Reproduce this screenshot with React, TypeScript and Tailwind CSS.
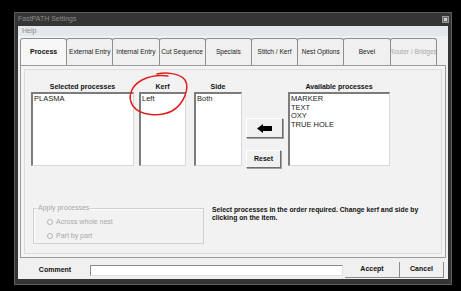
import React from "react";

const font = { fontFamily: '"Liberation Sans", Arial, sans-serif' };

const tabs = [
  "Process",
  "External Entry",
  "Internal Entry",
  "Cut Sequence",
  "Specials",
  "Stitch / Kerf",
  "Nest Options",
  "Bevel",
  "Router / Bridges",
];

function ListBox({ w, items }: { w: string; items: string[] }) {
  return (
    <div
      className={`${w} h-[74px] bg-white border-t-2 border-l-2 border-b border-r border-t-[#7c7c7c] border-l-[#7c7c7c] border-b-[#d8d8d8] border-r-[#d8d8d8] pl-[1px] pt-[1px] text-[7.5px] leading-[8.6px] text-[#1a1a1a]`}
    >
      {items.map((t) => (
        <div key={t}>{t}</div>
      ))}
    </div>
  );
}

function Radio({ label }: { label: string }) {
  return (
    <div className="flex items-center h-[14px] pl-[13px] gap-[3px]">
      <div className="w-[6px] h-[6px] rounded-full border border-[#b4b4b4] bg-[#f4f4f4]" />
      <span className="text-[7px] text-[#a8a8a8]">{label}</span>
    </div>
  );
}

export default function App() {
  return (
    <div className="w-[461px] h-[291px] bg-black pl-[14px] pt-[12px] relative overflow-hidden" style={font}>
      <div className="w-[438px] h-[273px] bg-[#353535] border border-[#5e5e5e] flex flex-col">
        {/* title bar */}
        <div className="h-[13px] flex items-center justify-between pl-[3px] pr-[2px]">
          <span className="text-[7px] text-[#8c8c8c]">FastPATH Settings</span>
          <div className="w-[7px] h-[7px] border border-[#9a9a9a] bg-[#6a6a6a] flex items-center justify-center">
            <div className="w-[3px] h-[3px] bg-[#d0d0d0]" />
          </div>
        </div>
        {/* body */}
        <div className="mx-[3px] mb-[5px] flex-1 bg-[#f0f0f0] flex flex-col">
          <div className="h-[10px] bg-[#e3e7ee] flex items-center pl-[4px]">
            <span className="text-[7px] text-[#8a8a8a]">Help</span>
          </div>
          {/* tabs */}
          <div className="flex px-[2px] pt-[2px] h-[29px]">
            {tabs.map((t, i) => (
              <div
                key={t}
                className={`w-[47.2px] h-[27px] flex items-center justify-center rounded-t-[3px] border border-b-0 border-[#8e8e8e] -ml-px first:ml-0 whitespace-nowrap overflow-hidden text-[6.6px] ${
                  i === 0
                    ? "bg-[#f7f7f7] font-bold text-[#111] text-[7px] z-10"
                    : i === 8
                    ? "bg-[#f0f0f0] text-[#a8a8a8]"
                    : "bg-[#f0f0f0] text-[#222]"
                }`}
              >
                {t}
              </div>
            ))}
          </div>
          {/* panel */}
          <div className="mx-[2px] h-[193px] border border-[#9a9a9a] bg-[#f4f4f4] p-[3px]">
            <div className="h-full border border-[#dcdcdc] bg-[#f2f2f2] flex flex-col">
              <div className="flex pl-[6px] pt-[12px]">
                <div className="flex flex-col gap-[1px]">
                  <div className="h-[9px] text-[7px] font-bold text-center text-[#111]">Selected processes</div>
                  <ListBox w="w-[103px]" items={["PLASMA"]} />
                </div>
                <div className="flex flex-col gap-[1px] ml-[5px]">
                  <div className="h-[9px] text-[7px] font-bold text-center text-[#111]">Kerf</div>
                  <ListBox w="w-[47px]" items={["Left"]} />
                </div>
                <div className="flex flex-col gap-[1px] ml-[8px]">
                  <div className="h-[9px] text-[7px] font-bold text-center text-[#111]">Side</div>
                  <ListBox w="w-[48px]" items={["Both"]} />
                </div>
                <div className="flex flex-col ml-[4px] pt-[36px]">
                  <div className="w-[37px] h-[20px] bg-[#f0f0f0] border border-t-white border-l-white border-b-[#6e6e6e] border-r-[#6e6e6e] shadow-[1px_1px_0_#a0a0a0] flex items-center justify-center">
                    <svg width="15" height="9" viewBox="0 0 15 9">
                      <polygon points="0,4.5 6,0 6,2 15,2 15,7 6,7 6,9" fill="#000" />
                    </svg>
                  </div>
                  <div className="mt-[12px] w-[35px] h-[18px] bg-[#f0f0f0] border border-t-white border-l-white border-b-[#6e6e6e] border-r-[#6e6e6e] shadow-[1px_1px_0_#a0a0a0] flex items-center justify-center text-[7px] font-bold text-[#111]">
                    Reset
                  </div>
                </div>
                <div className="flex flex-col gap-[1px] ml-[5px]">
                  <div className="h-[9px] text-[7px] font-bold text-center text-[#111]">Available processes</div>
                  <ListBox w="w-[102px]" items={["MARKER", "TEXT", "OXY", "TRUE HOLE"]} />
                </div>
              </div>
              <div className="flex mt-[40px] pl-[8px]">
                <div className="relative w-[171px] h-[36px] border border-[#d0d0d0] shadow-[inset_1px_1px_0_#fff] pt-[6px]">
                  <span className="absolute -top-[5px] left-[3px] bg-[#f2f2f2] px-[1px] text-[7px] leading-[8px] text-[#a8a8a8]">
                    Apply processes
                  </span>
                  <Radio label="Across whole nest" />
                  <Radio label="Part by part" />
                </div>
                <div className="ml-[8px] -mt-[2px] text-[6.8px] leading-[8px] font-bold text-[#111]">
                  Select processes in the order required. Change kerf and side by
                  <br />
                  clicking on the item.
                </div>
              </div>
            </div>
          </div>
          {/* bottom row */}
          <div className="flex items-center mt-[4px] pl-[2px]">
            <div className="w-[70px] text-center text-[7px] font-bold text-[#111]">Comment</div>
            <div className="w-[253px] h-[11px] bg-white border-t border-l border-[#8a8a8a] border-b-[#e0e0e0] border-r-[#e0e0e0] border-b border-r" />
            <div className="ml-[2px] w-[55px] h-[16px] border-r border-b border-[#8a8a8a] flex items-center justify-center text-[7px] font-bold text-[#111]">
              Accept
            </div>
            <div className="w-[44px] h-[16px] border-r border-b border-[#8a8a8a] flex items-center justify-center text-[7px] font-bold text-[#111]">
              Cancel
            </div>
          </div>
        </div>
      </div>
      <svg className="absolute left-0 top-0 pointer-events-none" width="461" height="291">
        <path
          d="M157,74 C165,72 180,73 185,80 C190,88 184,104 172,111 C160,117 140,116 133,106 C127,97 131,86 142,80 C150,76 160,75 168,76"
          fill="none"
          stroke="#e0201c"
          strokeWidth="1.5"
          strokeLinecap="round"
        />
      </svg>
    </div>
  );
}
